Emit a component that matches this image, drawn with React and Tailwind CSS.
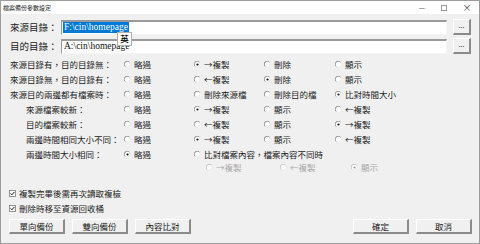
import React from 'react';

const font = { fontFamily: '"Noto Sans CJK TC", "Noto Sans", sans-serif' };

function Radio({ checked, disabled }) {
    const arc = disabled ? '#b8b8b8' : '#7a7a7a';
    return (
        <svg width="7" height="7" viewBox="0 0 7 7" className="shrink-0">
            <circle cx="3.5" cy="3.5" r="3" fill="#ffffff" />
            <path d="M5.6 1.4 A3 3 0 1 0 1.4 5.6" fill="none" stroke={arc} strokeWidth="0.9" />
            <path d="M5.6 1.4 A3 3 0 0 1 1.4 5.6" fill="none" stroke="#e4e4e4" strokeWidth="0.9" />
            {checked && <circle cx="3.5" cy="3.5" r="1.1" fill={disabled ? '#9a9a9a' : '#111111'} />}
        </svg>
    );
}

function Option({ label, checked, disabled, width = 'w-[70px]' }) {
    return (
        <div className={`${width} flex items-center gap-[3px] shrink-0`}>
            <Radio checked={checked} disabled={disabled} />
            <span className={disabled ? 'text-[#a8a8a8]' : 'text-[#1a1a1a]'}>{label}</span>
        </div>
    );
}

function Check({ label }) {
    return (
        <div className="flex items-center gap-[3px] h-[15px]">
            <svg width="7" height="7" viewBox="0 0 7 7" className="shrink-0">
                <rect x="0.5" y="0.5" width="6" height="6" fill="#ffffff" stroke="#7a7a7a" strokeWidth="0.8" />
                <path d="M1.6 3.4 L2.9 4.8 L5.4 1.9" fill="none" stroke="#111" strokeWidth="1" />
            </svg>
            <span>{label}</span>
        </div>
    );
}

function Btn({ children }) {
    return (
        <button className="w-[56px] h-[15px] bg-[#f0f0f0] border-t border-l border-t-white border-l-white border-r-2 border-b-2 border-r-[#8a8a8a] border-b-[#8a8a8a] flex items-center justify-center text-[8.5px] text-[#1a1a1a] leading-none">
            {children}
        </button>
    );
}

function PathRow({ label, value, selected, ime }) {
    return (
        <div className="flex items-center h-[16px]">
            <div className="w-[51px] text-[9.5px] text-[#1a1a1a]">{label}</div>
            <div className="relative w-[386px] h-[15px] bg-white border-t-2 border-l border-t-[#9a9a9a] border-l-[#9a9a9a] border-b border-r border-b-[#f4f4f4] border-r-[#f4f4f4] flex items-center pl-[1px]">
                <span
                    className={`text-[9.5px] leading-[11px] px-[1px] ${selected ? 'bg-[#0078d7] text-white' : 'text-[#111]'}`}
                    style={{ fontFamily: '"Liberation Serif", serif' }}
                >
                    {value}
                </span>
                {ime && (
                    <div className="absolute left-[55px] top-[10px] w-[15px] h-[14px] bg-white border border-[#b0b0b0] flex items-center justify-center text-[8.5px] font-bold z-10">
                        英
                    </div>
                )}
            </div>
            <button className="ml-[6px] w-[18px] h-[16px] bg-[#f0f0f0] border-t border-l border-t-white border-l-white border-r-2 border-b-2 border-r-[#8a8a8a] border-b-[#8a8a8a] flex items-center justify-center text-[7px] leading-none pb-[2px]">
                ...
            </button>
        </div>
    );
}

function OptRow({ label, indent, children }) {
    return (
        <div className="flex items-center h-[15px]">
            <div className={`w-[114px] shrink-0 ${indent ? 'pl-[16px]' : ''}`}>{label}</div>
            {children}
        </div>
    );
}

export default function App() {
    return (
        <div className="w-[480px] h-[244px] bg-[#f0f0f0] border border-[#9c9c9c] flex flex-col overflow-hidden text-[#1a1a1a]" style={font}>
            <div className="h-[13px] bg-white flex items-center shrink-0">
                <span className="pl-[2px] text-[6px] leading-none">檔案備份參數設定</span>
                <div className="ml-auto flex items-center h-full text-[#333]">
                    <span className="w-[22px] text-center text-[7px] leading-none">—</span>
                    <span className="w-[22px] flex justify-center"><span className="w-[6px] h-[6px] border border-[#999]"></span></span>
                    <span className="w-[24px] text-center text-[9px] leading-none">×</span>
                </div>
            </div>

            <div className="pl-[9px] pt-[5px] flex flex-col gap-[3px]">
                <PathRow label="來源目錄：" value="F:\cin\homepage" selected ime />
                <PathRow label="目的目錄：" value="A:\cin\homepage" />
            </div>

            <div className="pl-[9px] pt-[3px] text-[8.5px] leading-none flex flex-col">
                <OptRow label="來源目錄有，目的目錄無：">
                    <Option label="略過" />
                    <Option label="→複製" checked />
                    <Option label="刪除" width="w-[71px]" />
                    <Option label="顯示" />
                </OptRow>
                <OptRow label="來源目錄無，目的目錄有：">
                    <Option label="略過" />
                    <Option label="←複製" />
                    <Option label="刪除" checked width="w-[71px]" />
                    <Option label="顯示" />
                </OptRow>
                <OptRow label="來源目的兩邊都有檔案時：">
                    <Option label="略過" />
                    <Option label="刪除來源檔" />
                    <Option label="刪除目的檔" width="w-[71px]" />
                    <Option label="比對時間大小" checked width="w-[90px]" />
                </OptRow>
                <OptRow label="來源檔案較新：" indent>
                    <Option label="略過" />
                    <Option label="→複製" checked />
                    <Option label="顯示" width="w-[71px]" />
                    <Option label="←複製" />
                </OptRow>
                <OptRow label="目的檔案較新：" indent>
                    <Option label="略過" />
                    <Option label="←複製" />
                    <Option label="顯示" width="w-[71px]" />
                    <Option label="→複製" checked />
                </OptRow>
                <OptRow label="兩邊時間相同大小不同：" indent>
                    <Option label="略過" />
                    <Option label="→複製" checked />
                    <Option label="顯示" width="w-[71px]" />
                    <Option label="←複製" />
                </OptRow>
                <OptRow label="兩邊時間大小相同：" indent>
                    <Option label="略過" checked />
                    <Option label="比對檔案內容，檔案內容不同時" width="w-[200px]" />
                </OptRow>
                <div className="flex items-center h-[11px] pl-[196px]">
                    <Option label="→複製" disabled width="w-[74px]" />
                    <Option label="←複製" disabled width="w-[71px]" />
                    <Option label="顯示" checked disabled />
                </div>
            </div>

            <div className="pl-[8px] pt-[13px] text-[8.5px] leading-none flex flex-col">
                <Check label="複製完畢後需再次讀取複檢" />
                <Check label="刪除時移至資源回收桶" />
            </div>

            <div className="flex items-center pl-[8px] pr-[7px] pt-[3px]">
                <div className="flex gap-[7px]">
                    <Btn>單向備份</Btn>
                    <Btn>雙向備份</Btn>
                    <Btn>內容比對</Btn>
                </div>
                <div className="ml-auto flex gap-[7px]">
                    <Btn>確定</Btn>
                    <Btn>取消</Btn>
                </div>
            </div>
        </div>
    );
}
